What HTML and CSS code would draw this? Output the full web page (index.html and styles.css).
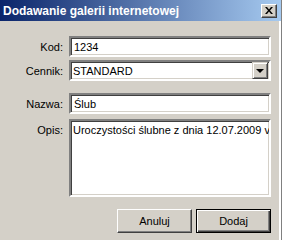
FILE: index.html
```html
<!DOCTYPE html>
<html lang="pl">
<head>
    <meta charset="UTF-8">
    <meta name="viewport" content="width=device-width, initial-scale=1.0">
    <title>Dodawanie galerii internetowej</title>
    <link rel="stylesheet" href="styles.css">
</head>
<body>

    <div class="window">
        <div class="titlebar">
            <span class="title">Dodawanie galerii internetowej</span>
            <button class="close-btn" aria-label="Zamknij">
                <svg width="8" height="7" viewBox="0 0 8 7">
                    <path d="M0 0h2l2 2.5L6 0h2L5 3.5 8 7H6L4 4.5 2 7H0l3-3.5z" fill="#000"/>
                </svg>
            </button>
        </div>

        <div class="form">
            <label class="label" for="kod">Kod:</label>
            <input class="field" type="text" id="kod" value="1234">

            <span class="label">Cennik:</span>
            <div class="select">
                <span class="select-text">STANDARD</span>
                <span class="select-arrow"><span class="triangle"></span></span>
            </div>

            <label class="label gap-top" for="nazwa">Nazwa:</label>
            <input class="field gap-top" type="text" id="nazwa" value="Ślub">

            <label class="label label-top" for="opis">Opis:</label>
            <textarea class="field area" id="opis" wrap="off">Uroczystości ślubne z dnia 12.07.2009 v</textarea>
        </div>

        <div class="buttons">
            <button class="btn">Anuluj</button>
            <button class="btn btn-default">Dodaj</button>
        </div>
    </div>

</body>
</html>
```

FILE: styles.css
```css
body {
    margin: 0;
    font-family: "Liberation Sans", Arial, sans-serif;
    font-size: 11px;
    color: #000;
    background: #d4d0c8;
}
.window {
    width: 282px;
    height: 240px;
    box-sizing: border-box;
    background: #d4d0c8;
    border-right: 1px solid #808080;
    box-shadow: inset -2px 0 0 #ffffff;
}
.titlebar {
    height: 21px;
    display: flex;
    align-items: center;
    justify-content: space-between;
    padding: 0 4px 0 3px;
    background: linear-gradient(90deg, #0a246a, #a6caf0);
}
.title {
    color: #fff;
    font-weight: bold;
    font-size: 12px;
}
.close-btn {
    width: 16px;
    height: 14px;
    padding: 0;
    display: flex;
    align-items: center;
    justify-content: center;
    background: #d4d0c8;
    border: 1px solid;
    border-color: #fff #404040 #404040 #fff;
    box-shadow: inset -1px -1px 0 #808080;
}
.form {
    display: grid;
    grid-template-columns: 63px 202px;
    column-gap: 6px;
    row-gap: 3px;
    padding-top: 15px;
}
.label {
    text-align: right;
    align-self: center;
}
.label-top {
    align-self: start;
    padding-top: 5px;
    margin-top: 2px;
}
.field {
    height: 21px;
    box-sizing: border-box;
    margin: 0;
    padding: 0 3px;
    font-family: inherit;
    font-size: 11px;
    background: #fff;
    border: 2px solid;
    border-color: #808080 #ffffff #ffffff #808080;
    box-shadow: inset 1px 1px 0 #404040, inset -1px -1px 0 #d4d0c8;
    outline: none;
}
.gap-top {
    margin-top: 9px;
}
.area {
    height: 78px;
    margin-top: 2px;
    padding: 3px 2px;
    resize: none;
    line-height: 13px;
    overflow: hidden;
    white-space: pre;
}
.select {
    height: 21px;
    box-sizing: border-box;
    display: flex;
    align-items: center;
    justify-content: space-between;
    padding: 0 0 0 2px;
    background: #fff;
    border: 2px solid;
    border-color: #808080 #ffffff #ffffff #808080;
    box-shadow: inset 1px 1px 0 #404040, inset -1px -1px 0 #d4d0c8;
}
.select-arrow {
    width: 16px;
    height: 17px;
    box-sizing: border-box;
    margin-right: 1px;
    display: flex;
    align-items: center;
    justify-content: center;
    background: #d4d0c8;
    border: 1px solid;
    border-color: #d4d0c8 #404040 #404040 #d4d0c8;
    box-shadow: inset 1px 1px 0 #fff, inset -1px -1px 0 #808080;
}
.triangle {
    width: 0;
    height: 0;
    border-left: 4px solid transparent;
    border-right: 4px solid transparent;
    border-top: 4px solid #000;
}
.buttons {
    display: flex;
    justify-content: flex-end;
    gap: 4px;
    padding: 12px 10px 0 0;
}
.btn {
    width: 75px;
    height: 24px;
    padding: 0;
    font-family: inherit;
    font-size: 11px;
    color: #000;
    background: #d4d0c8;
    border: 1px solid;
    border-color: #fff #404040 #404040 #fff;
    box-shadow: inset -1px -1px 0 #808080;
}
.btn-default {
    border: 1px solid #000;
    box-shadow: inset 1px 1px 0 #fff, inset -1px -1px 0 #404040, inset -2px -2px 0 #808080;
}
```
